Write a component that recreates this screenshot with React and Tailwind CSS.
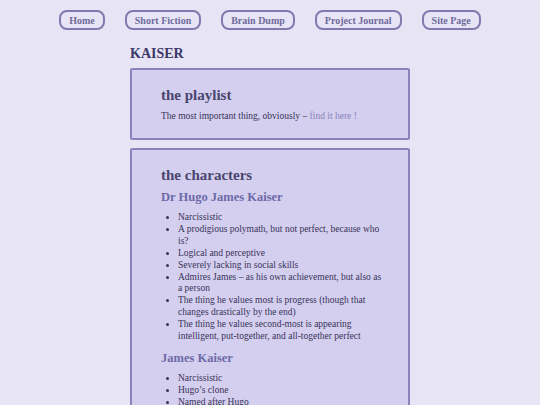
import React from "react";

const navItems = ["Home", "Short Fiction", "Brain Dump", "Project Journal", "Site Page"];

const hugo = [
  "Narcissistic",
  "A prodigious polymath, but not perfect, because who is?",
  "Logical and perceptive",
  "Severely lacking in social skills",
  "Admires James – as his own achievement, but also as a person",
  "The thing he values most is progress (though that changes drastically by the end)",
  "The thing he values second-most is appearing intelligent, put-together, and all-together perfect",
];

const james = ["Narcissistic", "Hugo’s clone", "Named after Hugo", "Has a lot of Hugo’s traits"];

const Card = ({ children, className = "" }) => (
  <div className={`border-2 border-[#8a82b8] bg-[#d4cfee] rounded-[2px] pl-[29px] pr-[26px] ${className}`}>
    {children}
  </div>
);

const App = () => {
  return (
    <div
      className="min-h-[405px] bg-[#e7e4f5] text-[#38335a]"
      style={{ fontFamily: '"Liberation Serif", Georgia, serif' }}
    >
      {/* NAV */}
      <nav className="flex justify-center gap-[20px] pt-[10px]">
        {navItems.map((n) => (
          <a
            key={n}
            className="h-[20px] px-[8px] flex items-center border-2 border-[#817aae] rounded-[8px] text-[10px] font-bold text-[#6f6b9c]"
          >
            {n}
          </a>
        ))}
      </nav>

      <main className="w-[280px] mx-auto">
        <h1 className="mt-[15px] text-[14px] font-bold leading-[18px] text-[#3b3766]">KAISER</h1>

        <Card className="mt-[5px] h-[72px] pt-[16px]">
          <h2 className="text-[15px] font-bold leading-[18px] text-[#4a456f]">the playlist</h2>
          <p className="mt-[6px] text-[9.5px] leading-[12px]">
            The most important thing, obviously – <a className="text-[#8a82b8]">find it here !</a>
          </p>
        </Card>

        <Card className="mt-[8px] pt-[16px] pb-[20px]">
          <h2 className="text-[15px] font-bold leading-[18px] text-[#4a456f]">the characters</h2>
          <h3 className="mt-[5px] text-[12.5px] font-bold leading-[16px] text-[#6d6aa8]">Dr Hugo James Kaiser</h3>
          <ul className="mt-[7px] pl-[17px] list-disc text-[9.5px] leading-[11.9px]">
            {hugo.map((t) => (
              <li key={t}>{t}</li>
            ))}
          </ul>
          <h3 className="mt-[7px] text-[12.5px] font-bold leading-[16px] text-[#6d6aa8]">James Kaiser</h3>
          <ul className="mt-[7px] pl-[17px] list-disc text-[9.5px] leading-[11.9px]">
            {james.map((t) => (
              <li key={t}>{t}</li>
            ))}
          </ul>
        </Card>
      </main>
    </div>
  );
};

export default App;
